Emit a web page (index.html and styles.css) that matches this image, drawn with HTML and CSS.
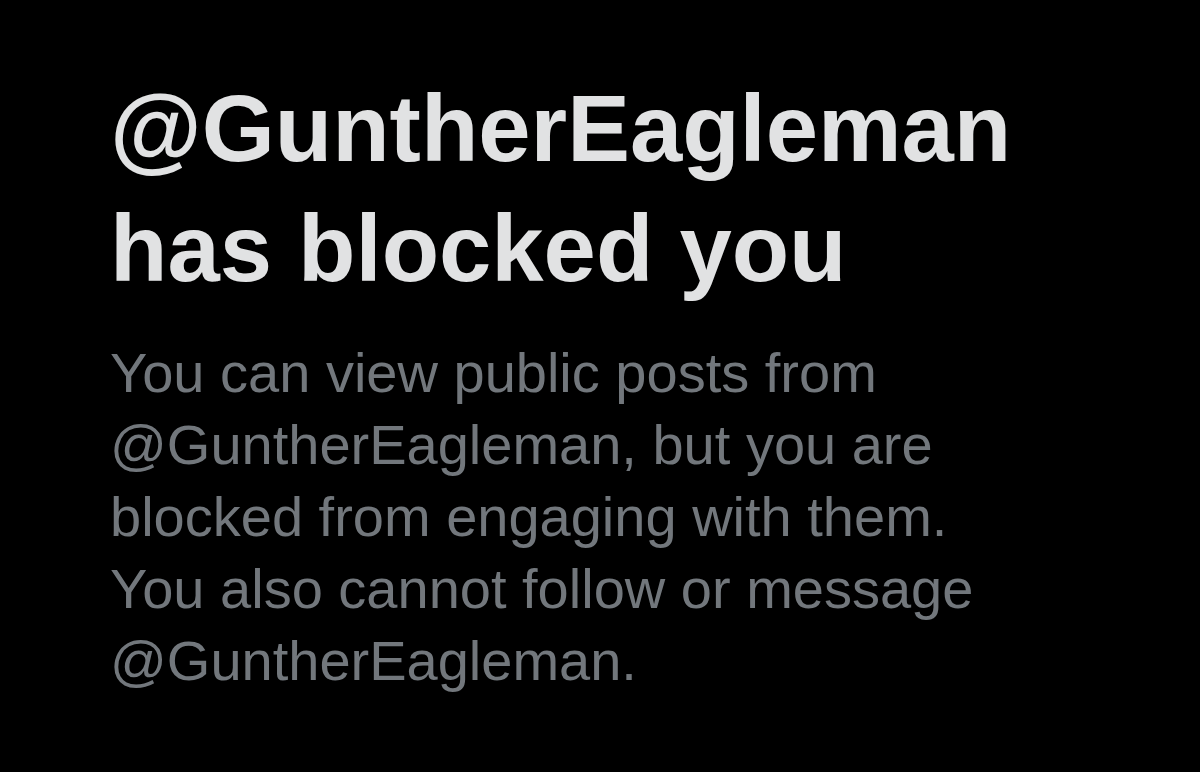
FILE: index.html
```html
<!DOCTYPE html>
<html lang="en">
<head>
    <meta charset="UTF-8">
    <meta name="viewport" content="width=device-width, initial-scale=1.0">
    <title>Blocked</title>
    <link rel="stylesheet" href="styles.css">
</head>
<body>

    <!-- Aviso de bloqueio -->
    <div class="blocked">
        <h1 class="blocked-title">@GuntherEagleman has blocked you</h1>
        <p class="blocked-text">You can view public posts from @GuntherEagleman, but you are blocked from engaging with them. You also cannot follow or message @GuntherEagleman.</p>
    </div>

</body>
</html>
```

FILE: styles.css
```css
body {
    font-family: 'Liberation Sans', Arial, sans-serif;
    background-color: #000000;
    margin: 0;
    padding: 0;
}

.blocked {
    padding: 69px 0 0 110px;
    width: 930px;
}

.blocked-title {
    color: #e1e2e3;
    font-size: 94px;
    line-height: 120px;
    font-weight: bold;
    margin: 0;
    width: 930px;
}

.blocked-text {
    color: #72777c;
    font-size: 56px;
    line-height: 72px;
    margin: 28px 0 0 0;
    width: 900px;
}
```
